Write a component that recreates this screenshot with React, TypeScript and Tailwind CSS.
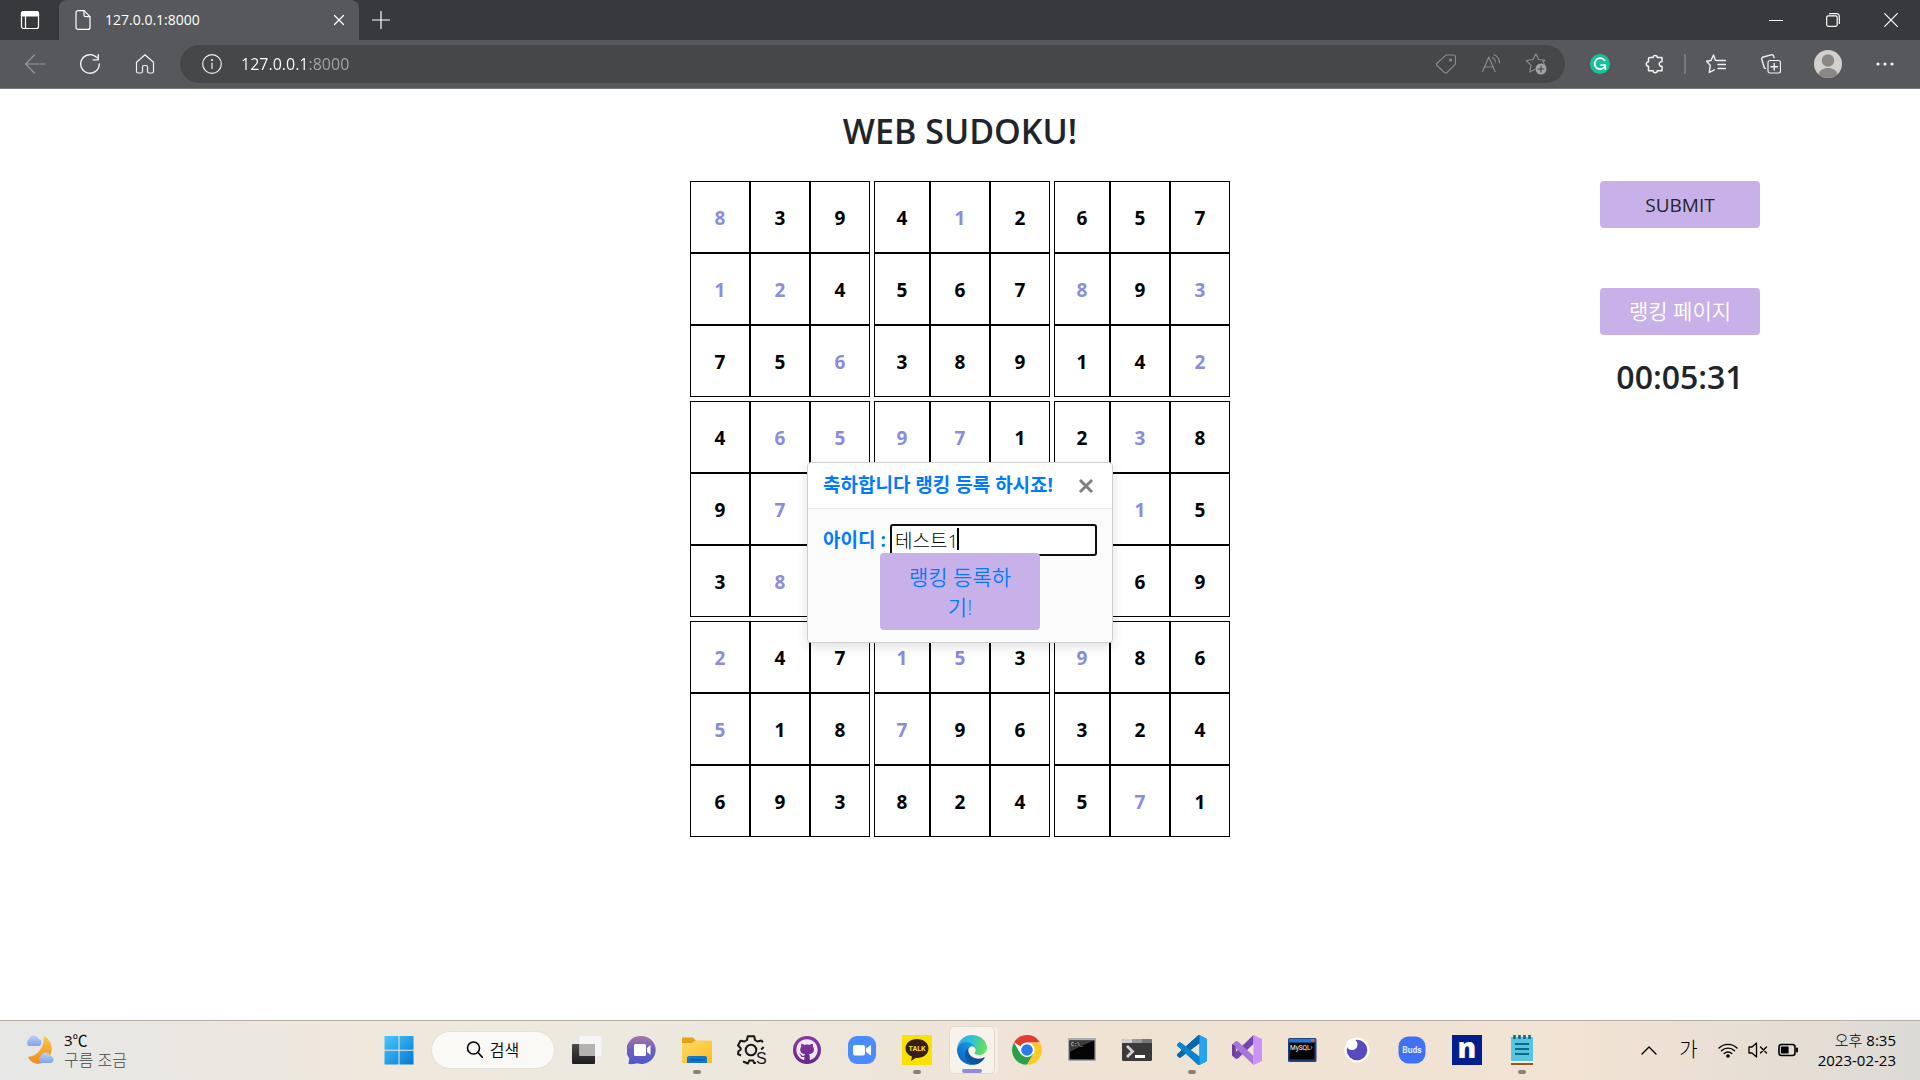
import React from "react";
import { FaGithub } from "react-icons/fa";

const ROWS = [
  "*8 3 9 4 *1 2 6 5 7",
  "*1 *2 4 5 6 7 *8 9 *3",
  "7 5 *6 3 8 9 1 4 *2",
  "4 *6 *5 *9 *7 1 2 *3 8",
  "9 *7 2 6 8 4 3 *1 5",
  "3 *8 1 5 2 7 4 6 9",
  "*2 4 7 *1 *5 3 *9 8 6",
  "*5 1 8 *7 9 6 3 2 4",
  "6 9 3 8 2 4 5 *7 1",
].map((r) => r.split(" "));

type P = { children: React.ReactNode; size?: number; box?: string };
function Line({ children, box = "0 0 20 20", size = 20 }: P) {
  return (
    <svg width={size} height={size} viewBox={box} fill="none" stroke="currentColor" strokeWidth="1.2" strokeLinecap="round" strokeLinejoin="round" aria-hidden="true">
      {children}
    </svg>
  );
}
function Art({ children, box = "0 0 30 30", size = 30 }: P) {
  return (
    <svg width={size} height={size} viewBox={box} aria-hidden="true">
      {children}
    </svg>
  );
}

function IconButton({ label, children, className = "" }: { label: string; children: React.ReactNode; className?: string }) {
  return (
    <button type="button" aria-label={label} className={`flex shrink-0 items-center justify-center ${className}`}>
      {children}
    </button>
  );
}

function TitleBar() {
  return (
    <div className="flex h-10 bg-[#38393c] text-white">
      <IconButton label="Tab actions" className="w-[59px]">
        <Line>
          <path d="M3.500 1.500h13a2 2 0 0 1 2 2v13a2 2 0 0 1-2 2h-13a2 2 0 0 1-2-2v-13a2 2 0 0 1 2-2z" />
          <path d="M1.500 6V3.500a2 2 0 0 1 2-2h13a2 2 0 0 1 2 2V6z" fill="currentColor" />
          <path d="M5.500 6v12.500" />
        </Line>
      </IconButton>
      <div className="flex w-[300px] items-center rounded-t-lg bg-[#57585c] pl-[14px] pr-2">
        <Line>
          <path d="M5 .6h6l6 6V17.400a2 2 0 0 1-2 2H5a2 2 0 0 1-2-2V2.600a2 2 0 0 1 2-2z" />
          <path d="M11 .6V5a1.600 1.600 0 0 0 1.600 1.600H17" />
        </Line>
        <span className="ml-3 flex-1 text-sm">127.0.0.1:8000</span>
        <IconButton label="Close tab" className="size-6">
          <Line size={12} box="0 0 12 12"><path d="m1.500 1.500 9 9m0-9-9 9" /></Line>
        </IconButton>
      </div>
      <IconButton label="New tab" className="w-11">
        <Line size={18} box="0 0 18 18"><path d="M9 .5v17M.5 9h17" /></Line>
      </IconButton>
      <div className="flex-1" />
      <IconButton label="Minimize" className="w-14">
        <Line size={14} box="0 0 14 14"><path d="M.5 7.500h13" /></Line>
      </IconButton>
      <IconButton label="Restore" className="w-[58px]">
        <Line size={14} box="0 0 14 14">
          <rect x=".7" y="2.800" width="10.500" height="10.500" rx="1.500" />
          <path d="M3.500.7h7.300a2.500 2.500 0 0 1 2.500 2.500v7.300" />
        </Line>
      </IconButton>
      <IconButton label="Close window" className="w-[58px]">
        <Line size={14} box="0 0 14 14"><path d="m.7.7 12.600 12.600m0-12.600L.7 13.300" /></Line>
      </IconButton>
    </div>
  );
}

function Toolbar() {
  return (
    <div className="flex h-[49px] items-center border-b border-[#77787b] bg-[#57585c] pl-[7px] pr-2 text-[#f1f1f2]">
      <IconButton label="Back" className="w-[55px] text-[#95969a]">
        <Line><path d="M19.500 10H.8M9.500 1 .6 10l8.900 9" /></Line>
      </IconButton>
      <IconButton label="Refresh" className="w-[55px]">
        <Line><path d="M19.300 10A9.300 9.300 0 1 1 16.800 3.600M18.300.7v5.200h-5.200" strokeWidth="1.400" /></Line>
      </IconButton>
      <IconButton label="Home" className="w-[55px]">
        <Line><path d="M1.500 8.300 10 .8l8.500 7.500v9.200a1.500 1.500 0 0 1-1.500 1.500h-3a1.500 1.500 0 0 1-1.500-1.500V13a1.500 1.500 0 0 0-1.500-1.500H9A1.500 1.500 0 0 0 7.500 13v4.500A1.500 1.500 0 0 1 6 19H3a1.500 1.500 0 0 1-1.500-1.500z" /></Line>
      </IconButton>
      <div className="ml-2 flex h-[38px] flex-1 items-center rounded-full bg-[#464749] pl-[22px] pr-[7px]">
        <IconButton label="Site information">
          <Line><circle cx="10" cy="10" r="9.300" /><path d="M10 9v5.500" /><circle cx="10" cy="6" r=".5" fill="currentColor" /></Line>
        </IconButton>
        <input
          aria-label="Address"
          defaultValue="127.0.0.1:8000"
          className="ml-[19px] h-6 min-w-0 flex-1 bg-[linear-gradient(90deg,#fff_67px,#a5a6a9_67px)] bg-clip-text text-base leading-6 text-transparent outline-none"
        />
        <IconButton label="Shopping" className="w-[45px] text-[#8a8b8e]">
          <Line><path d="M10.800 1h6.700a2 2 0 0 1 2 2v6.200a2 2 0 0 1-.6 1.400l-7.800 7.800a2 2 0 0 1-2.800 0L1.200 11.800a2 2 0 0 1 0-2.800l8.200-7.400a2 2 0 0 1 1.400-.6z" /><circle cx="14.500" cy="6" r="1" fill="currentColor" /></Line>
        </IconButton>
        <IconButton label="Read aloud" className="w-[45px] text-[#8a8b8e]">
          <Line><path d="M1.500 17.500 7.800 3l6.300 14.500M3.600 13h8.400M11.500 3.500c1.800.9 2.800 2.600 3 4.500M12.800.8c3.500 1.200 5.500 4 5.700 8" /></Line>
        </IconButton>
        <IconButton label="Add to favorites" className="w-[45px] text-[#8a8b8e]">
          <Line size={22} box="0 0 22 22"><path d="M19.500 11.500 18 8.500l2-1.200-6.300-.8L10.800.9 8 6.500l-6.800 1 4.800 4.600L4.800 19l4.700-2.500" /><circle cx="16" cy="16" r="5.500" fill="#a3a4a6" stroke="none" /><path d="M16 13v6m-3-3h6" stroke="#464749" /></Line>
        </IconButton>
      </div>
      <IconButton label="Grammarly" className="ml-[7px] w-[55px]">
        <Line><circle cx="10" cy="10" r="10" fill="#15c39a" stroke="none" /><path d="M14.600 6.400A5.500 5.500 0 1 0 15.200 12M11 11.200h4.300v4" stroke="#fff" strokeWidth="1.700" /></Line>
      </IconButton>
      <IconButton label="Extensions" className="w-[55px]">
        <Line><path d="M5 3.500h3.200a2 2 0 1 1 4 0H17v4.300a2.300 2.300 0 1 0 0 4.500v4.500h-4.800a2 2 0 1 1-4 0H3.500v-4.500a2.200 2.200 0 1 1 0-4.500V5A1.500 1.500 0 0 1 5 3.500z" strokeWidth="1.500" /></Line>
      </IconButton>
      <span className="mx-0.5 h-5 w-0.5 bg-[#77787c]" />
      <IconButton label="Favorites" className="w-[55px]">
        <Line><path d="M13 6.500 9.500 6.400 7.500 1 5 6.500l-4.500.8 3.700 4-.9 7.200 5-2.700M13 6.500h6.500M12 10.500h7.500M12 14.500h7.500" strokeWidth="1.400" /></Line>
      </IconButton>
      <IconButton label="Collections" className="w-[55px]">
        <Line><rect x="7" y="6.500" width="12.500" height="12.500" rx="2" /><path d="M13.200 9.500v6.500M10 12.700h6.500M4.500 14.500 3.300 13.800.8 5.500A2 2 0 0 1 2.200 3l8-2.200a2 2 0 0 1 2.500 1.400l.4 1.300" strokeWidth="1.400" /></Line>
      </IconButton>
      <IconButton label="Profile" className="w-[59px]">
        <Art size={28} box="0 0 28 28"><circle cx="14" cy="14" r="14" fill="#d2d0cd" /><circle cx="14" cy="10.500" r="6.200" fill="#8b8784" /><path d="M4.500 24.200c1-4 4.500-6.200 9.500-6.200s8.500 2.200 9.500 6.200a14 14 0 0 1-19 0z" fill="#8b8784" /></Art>
      </IconButton>
      <IconButton label="Settings and more" className="w-[55px]">
        <Art size={18} box="0 0 18 18"><g fill="#f1f1f2"><circle cx="2" cy="9" r="1.600" /><circle cx="9" cy="9" r="1.600" /><circle cx="16" cy="9" r="1.600" /></g></Art>
      </IconButton>
    </div>
  );
}

function Board() {
  return (
    <table className="mt-[30px] border-separate border-spacing-0" aria-label="Sudoku">
      <tbody className="flex flex-col">
        {ROWS.map((row, r) => (
          <tr key={r} className={`flex ${r === 3 || r === 6 ? "mt-1" : ""}`}>
            {row.map((cell, c) => (
              <td
                key={c}
                className={`flex h-[72px] items-center justify-center border border-black p-0 pt-0.5 text-[19px] font-bold ${c === 3 || c === 6 ? "ml-1 w-14" : "w-[60px]"} ${cell[0] === "*" ? "text-[#8b8bdf]" : "text-black"}`}
              >
                {cell.replace("*", "")}
              </td>
            ))}
          </tr>
        ))}
      </tbody>
    </table>
  );
}

function RankingDialog() {
  return (
    <div className="pointer-events-none absolute inset-0 flex items-center justify-center pb-1">
      <form role="dialog" aria-labelledby="dialog-title" className="pointer-events-auto w-[306px] rounded-[4px] border border-[#d0d0d0] bg-[#fcfcfc] text-[19px] text-[#007bff] shadow-[0_4px_12px_rgba(0,0,0,0.12)]">
        <div className="flex h-[46px] items-center justify-between rounded-t-[4px] border-b border-[#e9e9e9] bg-white pl-[15px] pr-[18px]">
          <h2 id="dialog-title" className="pb-0.5 font-bold leading-7">축하합니다 랭킹 등록 하시죠!</h2>
          <button type="button" aria-label="닫기" className="text-[#808080]">
            <svg width="16" height="16" viewBox="0 0 16 16" stroke="currentColor" strokeWidth="3" aria-hidden="true"><path d="m2 2 12 12M14 2 2 14" /></svg>
          </button>
        </div>
        <div className="px-[15px] pb-3 pt-[15px]">
          <div className="flex items-center justify-between">
            <label htmlFor="player" className="shrink-0 font-bold leading-7">아이디 :</label>
            <div className="relative w-[207px]">
              <input id="player" defaultValue="테스트1" className="block h-8 w-full rounded-[3px] border-2 border-[#101010] bg-white px-[3px] text-[19px] font-light text-black outline-none" />
              <span className="absolute left-[67px] top-1 h-[22px] w-0.5 bg-black" />
            </div>
          </div>
          <button type="button" className="relative mx-auto -mt-[3px] block w-40 rounded-[4px] bg-[#c8b1e8] px-6 pb-2 pt-[9px] text-center text-[21px] font-[350] leading-[30px]">
            랭킹 등록하기!
          </button>
        </div>
      </form>
    </div>
  );
}

const VS = "M71 99a6 6 0 0 0 5-.2l20.500-9.800A6 6 0 0 0 100 83.600V16.400A6 6 0 0 0 96.500 11L76 1a6 6 0 0 0-7 1.200L29.400 38 12.200 25a4 4 0 0 0-5.300.2l-5.500 5a4 4 0 0 0 0 6.200L16.200 50 1.400 63.500a4 4 0 0 0 0 6.200l5.500 5a4 4 0 0 0 5.300.2L29.400 62 69 98zM75 27.300 45.100 50 75 72.700z";

const APPS: { name: string; icon: React.ReactNode; open?: boolean; active?: boolean }[] = [
  {
    name: "작업 보기",
    icon: (
      <Art>
        <defs><linearGradient id="tv" x1="0" y1="0" x2="0" y2="1"><stop stopColor="#4b4a49" /><stop offset="1" stopColor="#1d1d1d" /></linearGradient></defs>
        <rect x="0" y="9" width="23" height="20" rx="1" fill="url(#tv)" /><rect x="7.500" y="1" width="22" height="20" rx="1" fill="#f5f5f5" /><path d="M7.500 9H23v12H7.500z" fill="#b3b2b0" />
      </Art>
    ),
  },
  {
    name: "채팅",
    icon: (
      <Art>
        <defs><linearGradient id="ch" x1="0" y1="0" x2="0" y2="1"><stop stopColor="#a479a8" /><stop offset=".5" stopColor="#6a5fc0" /><stop offset="1" stopColor="#5059c9" /></linearGradient></defs>
        <path d="M15 1a14 14 0 1 1-5 27.200c-3 .9-6 1.100-8.600.8l.9-5.600A14 14 0 0 1 15 1z" fill="url(#ch)" /><rect x="7" y="9" width="12" height="12" rx="1.500" fill="#fff" /><path d="m20 13 3.500-3v10L20 17z" fill="#fff" />
      </Art>
    ),
  },
  {
    name: "파일 탐색기",
    open: true,
    icon: (
      <Art>
        <defs><linearGradient id="fo" x1="0" y1="0" x2="1" y2="1"><stop stopColor="#ffdb68" /><stop offset="1" stopColor="#fcbc21" /></linearGradient></defs>
        <path d="M0 3.500A1 1 0 0 1 1 2.500h10l3 3-4 3.500H0z" fill="#e2a213" /><path d="M0 8h10l3-2.500h16a1 1 0 0 1 1 1V28H0z" fill="url(#fo)" /><path d="M5 28v-5a2 2 0 0 1 2-2h16a2 2 0 0 1 2 2v5z" fill="#1079cf" /><path d="M8.500 25h13" stroke="#0a4f91" />
      </Art>
    ),
  },
  {
    name: "설정",
    icon: (
      <Art>
        <g fill="none" stroke="#161616" strokeWidth="2" strokeLinejoin="round"><circle cx="14" cy="15" r="5.300" /><path d="M4 20.500 1 19l.3-2.500 2.400-2-.1-1.600L1 10.500l2.500-4.800L7.500 6.500 10 5l.8-3.800h6.400L18 5l2.500 1.500L24.500 5.500l1.300 1.800M24.200 14.500l2.500-2.500M19 28h-2l-.8-2.500h-4L11 28.500l-5-2" /></g>
        <text x="19" y="29" fontSize="16" fontFamily="Liberation Sans" fill="#161616">S</text>
      </Art>
    ),
  },
  {
    name: "GitHub Desktop",
    icon: <span className="flex size-7 items-center justify-center rounded-full bg-gradient-to-b from-[#8a35a8] to-[#652a86]"><FaGithub size={22} color="#f3e9f6" /></span>,
  },
  {
    name: "Zoom",
    icon: (
      <Art>
        <rect x="1" y="1" width="28" height="28" rx="9" fill="#4a8cff" /><rect x="6" y="10" width="12" height="10.500" rx="2" fill="#fff" /><path d="m19 13.500 5-3.500v10.500L19 17z" fill="#fff" />
      </Art>
    ),
  },
  {
    name: "카카오톡",
    open: true,
    icon: (
      <Art>
        <path d="M0 0h30v30H0z" fill="#fae100" /><path d="M15 4c6.400 0 11.500 4 11.500 9.500S21.400 23 15 23l-1.500-.1L9 26l1-4.500c-4-1.300-6.500-4.500-6.500-8C3.500 8 8.600 4 15 4z" fill="#371d1e" /><text x="15" y="16" textAnchor="middle" fontSize="7" fontWeight="700" fontFamily="Roboto" fill="#fae100">TALK</text>
      </Art>
    ),
  },
  {
    name: "Edge",
    active: true,
    icon: (
      <Art box="0 0 256 256">
        <defs>
          <linearGradient id="e1" x1=".2" y1=".5" x2="1" y2=".6"><stop stopColor="#0c59a4" /><stop offset="1" stopColor="#114a8b" /></linearGradient>
          <linearGradient id="e2" x1=".9" y1=".2" x2=".3" y2="1"><stop stopColor="#1b9de2" /><stop offset=".4" stopColor="#1583d8" /><stop offset="1" stopColor="#0a66c4" /></linearGradient>
          <linearGradient id="e3" x1="0" y1=".4" x2="1" y2=".6"><stop stopColor="#35aee8" /><stop offset=".45" stopColor="#2fc2d0" /><stop offset=".9" stopColor="#62dc63" /><stop offset="1" stopColor="#66eb6e" /></linearGradient>
        </defs>
        <path fill="url(#e1)" d="M231.070 190.540c-3.400 1.770-6.900 3.350-10.540 4.710a101.870 101.870 0 0 1-35.900 6.460c-47.320 0-88.540-32.550-88.540-74.320a31.480 31.480 0 0 1 16.430-27.310c-42.800 1.800-53.800 46.400-53.800 72.530 0 73.880 68.090 81.370 82.760 81.370 7.910 0 19.840-2.300 27-4.560l1.310-.44a128.340 128.340 0 0 0 66.600-52.800 4 4 0 0 0-5.320-5.640z" />
        <path fill="url(#e2)" d="M105.730 241.420a79.200 79.200 0 0 1-22.740-21.340 80.720 80.720 0 0 1 29.530-120c3.120-1.470 8.450-4.130 15.540-4a32.350 32.350 0 0 1 25.690 13 31.880 31.880 0 0 1 6.360 18.660c0-.21 24.460-79.600-80-79.600-43.900 0-80 41.660-80 78.210a130.150 130.150 0 0 0 12.110 56 128 128 0 0 0 156.380 67.110 75.550 75.550 0 0 1-62.780-8z" />
        <path fill="url(#e3)" d="M152.330 148.860c-.81 1.050-3.300 2.500-3.300 5.660 0 2.610 1.700 5.120 4.720 7.230 14.380 10 41.490 8.680 41.560 8.680a59.560 59.560 0 0 0 30.270-8.350 61.380 61.380 0 0 0 30.430-52.880c.26-22.410-8-37.310-11.340-43.910C223.480 23.840 177.750 0 128 0A128 128 0 0 0 0 126.200c.48-36.540 36.800-66.050 80-66.050 3.500 0 23.460.34 42 10.070 16.340 8.580 24.900 18.940 30.850 29.210 6.180 10.670 7.280 24.150 7.280 29.520s-2.740 13.330-7.800 19.910z" />
      </Art>
    ),
  },
  {
    name: "Chrome",
    icon: (
      <Art box="0 0 48 48">
        <circle cx="24" cy="24" r="24" fill="#fff" /><path d="M3.200 12A24 24 0 0 1 44.800 12H24a12 12 0 0 0-10.400 6z" fill="#e33b2e" /><path d="M3.200 12 13.600 30A12 12 0 0 0 24 36l-1 12A24 24 0 0 1 3.200 12z" fill="#2c9e48" /><path d="M13.600 30 24 48 34.400 30z" fill="#2c9e48" /><path d="M44.800 12A24 24 0 0 1 24 48l10.400-18A12 12 0 0 0 34.400 18L30 12z" fill="#fdc92b" /><circle cx="24" cy="24" r="11.500" fill="#fff" /><circle cx="24" cy="24" r="9.300" fill="#2a7de9" />
      </Art>
    ),
  },
  {
    name: "명령 프롬프트",
    icon: (
      <Art>
        <rect x="1" y="3" width="28" height="23" rx="1" fill="#a8abb0" /><path d="M2.500 5.500h25v19h-25z" fill="#050505" /><path d="M2.500 5.500h25C20 8 12 12 2.500 17z" fill="#3b3b3b" /><text x="4" y="11" fontSize="5" fontFamily="Liberation Mono" fill="#e8e8e8">C:\_</text>
      </Art>
    ),
  },
  {
    name: "터미널",
    icon: (
      <Art>
        <rect x="0" y="4" width="30" height="22" rx="1.500" fill="#3a3a3a" /><path d="M0 8V5.500A1.500 1.500 0 0 1 1.500 4H10v4z" fill="#d0d0d0" /><path d="M10 4h10v4H10z" fill="#999" /><path d="M20 4h8.500A1.500 1.500 0 0 1 30 5.500V8H20z" fill="#777" /><path d="m5 11 5.500 5.500L5 22" fill="none" stroke="#d3d3d3" strokeWidth="2.800" /><path d="M13 21.500h10" stroke="#fff" strokeWidth="3" />
      </Art>
    ),
  },
  {
    name: "Visual Studio Code",
    open: true,
    icon: (
      <Art box="0 0 100 100">
        <path d={VS} fill="#0a7cc6" fillRule="evenodd" />
        <path d="M1.400 63.500 69 2.200A6 6 0 0 1 75 1v26.300L12.200 75a4 4 0 0 1-5.300-.2l-5.500-5a4 4 0 0 1 0-6.300z" fill="#0868ab" />
        <path d="M1.400 36.500 69 98l6 1V72.700L12.200 25a4 4 0 0 0-5.300.2l-5.500 5a4 4 0 0 0 0 6.300z" fill="#0a84cc" />
        <path d="M75 1v98l21.500-10a6 6 0 0 0 3.500-5.400V16.400A6 6 0 0 0 96.500 11z" fill="#26a3ee" />
      </Art>
    ),
  },
  {
    name: "Visual Studio",
    icon: (
      <Art>
        <path d="M0 9.500v11L3.500 19V11z" fill="#52218a" /><path d="M0 20.500V9.500l3.500 2v7z" fill="#6a3f9e" /><path d="M0 20.500 21.500 0v9L6 23.500l-2 .5z" fill="#7345ad" /><path d="M0 9.500 4 6l2 .5L21.500 21v9z" fill="#a675dd" /><path d="M0 9.500 3.500 11v8L0 20.500z" fill="#6a3f9e" /><path d="M21.500 0 30 4v22l-8.500 4z" fill="#ca92f7" />
      </Art>
    ),
  },
  {
    name: "MySQL",
    icon: (
      <Art>
        <rect x="1" y="3" width="28.500" height="24" rx="1.500" fill="#20427c" /><path d="M2 4h26.500v3H2z" fill="#1d77d8" /><path d="M24 4h3.500v2.500H24z" fill="#e2574a" /><path d="M2.500 8h25v16.500h-25z" fill="#050505" /><text x="3" y="15" fontSize="6.500" fontFamily="Roboto" fill="#fff">MySQL›</text>
      </Art>
    ),
  },
  {
    name: "Insomnia",
    icon: (
      <Art>
        <circle cx="15" cy="15" r="12.500" fill="#fff" /><circle cx="15" cy="15" r="10.300" fill="#5849be" /><circle cx="10" cy="9.500" r="5.500" fill="#fff" />
      </Art>
    ),
  },
  {
    name: "Galaxy Buds",
    icon: (
      <Art>
        <rect x="1.500" y="1.500" width="27" height="27" rx="10" fill="#4071f5" /><text x="15" y="18" textAnchor="middle" fontSize="8.500" fontWeight="700" fontFamily="Roboto" fill="#e6ecff">Buds</text>
      </Art>
    ),
  },
  {
    name: "n",
    icon: (
      <Art>
        <path d="M0 0h30v30H0z" fill="#001e8c" /><text x="15" y="22.500" textAnchor="middle" fontSize="28" fontWeight="800" fontFamily="Open Sans" fill="#fff">n</text>
      </Art>
    ),
  },
  {
    name: "메모장",
    open: true,
    icon: (
      <Art>
        <path d="M4 26h22v4H4z" fill="#a1501a" /><path d="M4 24h22v4H4z" fill="#f3efe9" /><path d="M4 2h22v24H4z" fill="#57c5e0" /><path d="M8 9h14M8 14h14M8 19h14" stroke="#0b6b8a" strokeWidth="1.800" /><path d="M7.500 0v4m5-4v4m5-4v4m5-4v4" stroke="#0b6b8a" strokeWidth="2.600" />
      </Art>
    ),
  },
];

function Taskbar() {
  return (
    <footer className="flex h-[60px] items-center justify-between border-t border-[#b5afa6] bg-[linear-gradient(90deg,#e6e7e6_0%,#f0e8dc_22%,#ece9e0_32%,#efe3d5_55%,#f2e3d3_82%,#e3ddd5_95%,#dcdad6_100%)] px-6 pb-0.5 text-black">
      <button type="button" className="flex flex-1 items-center gap-2 text-left">
        <Art size={32} box="0 0 32 32">
          <defs>
            <linearGradient id="mo" x1="0" y1="0" x2="0" y2="1"><stop stopColor="#f7c74a" /><stop offset="1" stopColor="#f08a1c" /></linearGradient>
            <linearGradient id="cl" x1="0" y1="0" x2="0" y2="1"><stop stopColor="#b9d2f7" /><stop offset="1" stopColor="#7fa5e6" /></linearGradient>
          </defs>
          <path d="M20 2c10 6 10 18 2 25C16 32 7 30 4 23c9-1 16-8 16-21z" fill="url(#mo)" />
          <path d="M5 12a4 4 0 0 1 0-7 5 5 0 0 1 9.500 0 3.600 3.600 0 0 1 .5 7z" fill="url(#cl)" />
          <path d="M17 29a4 4 0 0 1 0-7 5 5 0 0 1 9.500 0 3.600 3.600 0 0 1 .5 7z" fill="url(#cl)" />
        </Art>
        <span className="flex flex-col text-[15px] leading-5">
          <span>3℃</span>
          <span className="text-base font-light leading-5 text-[#444]">구름 조금</span>
        </span>
      </button>
      <nav className="ml-[13px] flex items-center" aria-label="작업 표시줄">
        <IconButton label="시작" className="mr-[17px]">
          <Art>
            <defs><linearGradient id="wi" x1="0" y1="0" x2="1" y2="1"><stop stopColor="#4cc8f8" /><stop offset="1" stopColor="#0377d4" /></linearGradient></defs>
            <path d="M.5 1h14v13.800H.5zm15 0h14v13.800h-14zm-15 14.800h14v13.800H.5zm15 0h14v13.800h-14z" fill="url(#wi)" />
          </Art>
        </IconButton>
        <button type="button" className="mr-[5px] flex h-[38px] w-[124px] items-center justify-center gap-[7px] rounded-full border border-[#e6e1d8] bg-[#fbf9f5] text-base font-[350]">
          <Line size={17} box="0 0 17 17"><g strokeWidth="1.600"><circle cx="7.500" cy="7" r="6" /><path d="m12 11.500 4.500 5" /></g></Line>
          검색
        </button>
        {APPS.map((app) => (
          <button type="button" key={app.name} aria-label={app.name} className="flex h-[57px] w-[55px] items-center justify-center">
            <span className={app.active ? "relative flex h-12 w-[46px] items-center justify-center rounded-[5px] border border-[#e3dad0] bg-[#f8f2ec] shadow-[4px_0_0_-1px_#f6eee6]" : "relative flex h-12 w-[46px] items-center justify-center"}>
              {app.icon}
              {app.open && <span className="absolute inset-x-0 bottom-0 mx-auto h-1 w-2 rounded-full bg-[#8a8177]" />}
              {app.active && <span className="absolute inset-x-0 bottom-0 mx-auto h-1 w-5 rounded-full bg-[#918bdc]" />}
            </span>
          </button>
        ))}
      </nav>
      <div className="flex flex-1 items-center justify-end">
        <IconButton label="숨겨진 아이콘 표시" className="mr-[22px]">
          <Line size={16} box="0 0 16 16"><path d="m1 12 7-7 7 7" strokeWidth="1.400" /></Line>
        </IconButton>
        <button type="button" aria-label="한글 입력" className="mr-5 text-[20px] font-light leading-6">가</button>
        <button type="button" aria-label="네트워크, 소리, 배터리" className="mr-5 flex items-center gap-[10px]">
          <Line><path d="M1 8a13 13 0 0 1 18 0M3.500 10.800a9.300 9.300 0 0 1 13 0M6.200 13.500a5.400 5.400 0 0 1 7.600 0" strokeWidth="1.400" /><circle cx="10" cy="16" r="1.200" fill="currentColor" /></Line>
          <Line><path d="M1 7h3l4.500-4v14L4 13H1zM12.500 7l6 6m0-6-6 6" strokeWidth="1.300" /></Line>
          <Line><rect x="1" y="4.500" width="16" height="11" rx="2.500" strokeWidth="1.600" /><path d="M3.500 7H10v6H3.500z" fill="currentColor" /><path d="M19 8.500v3" strokeWidth="2" /></Line>
        </button>
        <button type="button" className="flex flex-col items-end text-[15px] leading-5">
          <span><span className="font-light">오후</span> 8:35</span>
          <span>2023-02-23</span>
        </button>
      </div>
    </footer>
  );
}

export default function App() {
  return (
    <div className="flex min-h-screen flex-col bg-white font-['Open_Sans','Noto_Sans_CJK_KR',sans-serif] text-[#212529]">
      <header>
        <TitleBar />
        <Toolbar />
      </header>
      <main className="relative grid flex-1 grid-cols-[1fr_2fr_1fr] content-start">
        <section className="col-start-2 flex flex-col items-center pt-[22px]">
          <h1 className="text-[34px] font-semibold leading-10">WEB SUDOKU!</h1>
          <Board />
        </section>
        <aside className="flex flex-col items-center pt-[92px]">
          <button type="button" className="h-[47px] w-40 rounded-[4px] bg-[#c8b1e8] pt-0.5 text-[19px]">SUBMIT</button>
          <a href="#ranking" className="mt-[60px] flex h-[47px] w-40 items-center justify-center rounded-[4px] bg-[#c8b1e8] text-[21px] font-[350] text-white">랭킹 페이지</a>
          <time className="mt-[22px] text-[32px] font-semibold leading-10">00:05:31</time>
        </aside>
        <RankingDialog />
      </main>
      <Taskbar />
    </div>
  );
}
